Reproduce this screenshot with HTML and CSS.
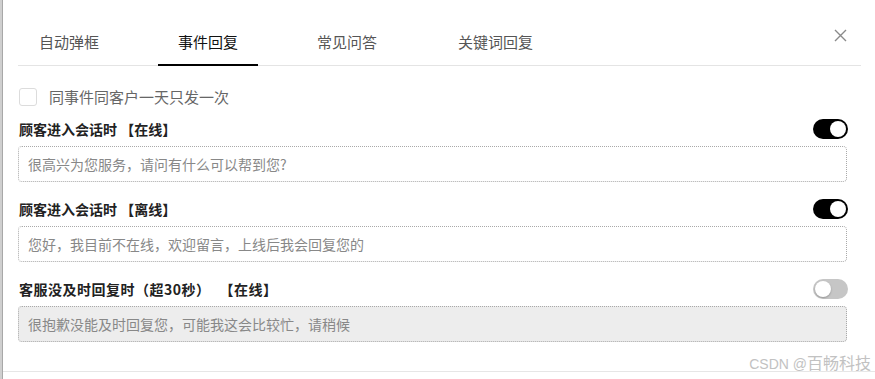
FILE: index.html
```html
<!DOCTYPE html>
<html lang="zh-CN">
<head>
  <meta charset="UTF-8">
  <title>自动回复设置</title>
  <link rel="stylesheet" href="styles.css">
</head>
<body>
  <div class="modal">
    <div class="modal-head">
      <div class="tabs">
        <div class="tab">自动弹框</div>
        <div class="tab active">事件回复</div>
        <div class="tab">常见问答</div>
        <div class="tab">关键词回复</div>
      </div>
      <span class="close">
        <svg width="13" height="13" viewBox="0 0 13 13"><path d="M1 1L12 12M12 1L1 12" stroke="#8a8a8a" stroke-width="1.4" fill="none"/></svg>
      </span>
    </div>

    <div class="modal-body">
      <label class="check-row">
        <span class="check-box"></span>
        <span class="check-text">同事件同客户一天只发一次</span>
      </label>

      <div class="reply-item">
        <div class="reply-head">
          <span class="reply-title">顾客进入会话时 【在线】</span>
          <span class="switch on"><span class="knob"></span></span>
        </div>
        <div class="reply-input">很高兴为您服务，请问有什么可以帮到您?</div>
      </div>

      <div class="reply-item">
        <div class="reply-head">
          <span class="reply-title">顾客进入会话时 【离线】</span>
          <span class="switch on"><span class="knob"></span></span>
        </div>
        <div class="reply-input">您好，我目前不在线，欢迎留言，上线后我会回复您的</div>
      </div>

      <div class="reply-item">
        <div class="reply-head">
          <span class="reply-title wide">客服没及时回复时（超30秒）<span class="status">【在线】</span></span>
          <span class="switch"><span class="knob"></span></span>
        </div>
        <div class="reply-input disabled">很抱歉没能及时回复您，可能我这会比较忙，请稍候</div>
      </div>
    </div>

    <div class="modal-foot"></div>
    <span class="watermark"><span class="wm-latin">CSDN @</span>百畅科技</span>
  </div>
</body>
</html>
```

FILE: styles.css
```css
body {
  margin: 0;
  background: #cfcfcf;
  font-family: "Noto Sans CJK SC", "Noto Sans", sans-serif;
  overflow: hidden;
}
.modal {
  position: relative;
  margin-left: 2px;
  height: 379px;
  background: #fff;
  border-left: 1px solid #a8a8a8;
  padding-left: 15px;
  box-sizing: border-box;
}
.modal-head {
  display: flex;
  align-items: flex-start;
  padding-top: 25px;
  width: 843px;
  position: relative;
}
.tabs {
  display: flex;
  gap: 39px;
  flex: 1;
  border-bottom: 1px solid #e4e4e4;
  padding-left: 1px;
}
.tab {
  position: relative;
  padding: 0 20px 6px;
  line-height: 34px;
  font-size: 15px;
  color: #555;
}
.tab:last-child {
  padding-left: 22px;
}
.tab.active {
  color: #111;
}
.tab.active::after {
  content: "";
  position: absolute;
  left: 0;
  right: 0;
  bottom: -1px;
  height: 2px;
  background: #000;
}
.close {
  position: absolute;
  right: 14px;
  top: 29px;
  width: 13px;
  height: 13px;
}
.close svg {
  display: block;
}
.modal-body {
  width: 829px;
  padding-top: 22px;
}
.check-row {
  display: flex;
  align-items: center;
  height: 18px;
  margin-bottom: 13px;
}
.check-box {
  width: 16px;
  height: 16px;
  border: 1px solid #dcdcdc;
  border-radius: 3px;
  margin-left: 1px;
  margin-right: 12px;
}
.check-text {
  font-size: 15px;
  line-height: 16px;
  color: #666;
}
.reply-item {
  margin-bottom: 17px;
}
.reply-head {
  display: flex;
  justify-content: space-between;
  align-items: center;
  height: 20px;
  margin-bottom: 7px;
}
.reply-title {
  font-size: 14px;
  font-weight: bold;
  color: #222;
  padding-left: 1px;
  white-space: pre;
}
.reply-title.wide {
  letter-spacing: 0.5px;
}
.reply-title .status {
  margin-left: 16px;
}
.switch {
  position: relative;
  width: 35px;
  height: 20px;
  border-radius: 10px;
  background: #c6c6c6;
  margin-right: -1px;
}
.switch .knob {
  position: absolute;
  top: 2px;
  left: 2px;
  width: 16px;
  height: 16px;
  border-radius: 50%;
  background: #fff;
  box-shadow: 0 1px 2px rgba(0,0,0,0.25);
}
.switch.on {
  background: #000;
}
.switch.on .knob {
  left: 17px;
  box-shadow: none;
}
.reply-input {
  height: 36px;
  line-height: 34px;
  box-sizing: border-box;
  border: 1px dotted #a9a9a9;
  border-radius: 4px;
  padding-left: 9px;
  font-size: 14px;
  color: #888;
}
.reply-input.disabled {
  background: #ededed;
}
.modal-foot {
  position: absolute;
  left: 0;
  right: 0;
  top: 371px;
  border-top: 1px solid #e6e6e6;
}
.watermark {
  position: absolute;
  right: 4px;
  bottom: 6px;
  font-size: 16px;
  line-height: 18px;
  color: #c2c2c2;
  text-shadow: 0 0 2px #fff;
}
.wm-latin {
  font-family: "Liberation Sans", sans-serif;
  font-size: 14px;
}
```
